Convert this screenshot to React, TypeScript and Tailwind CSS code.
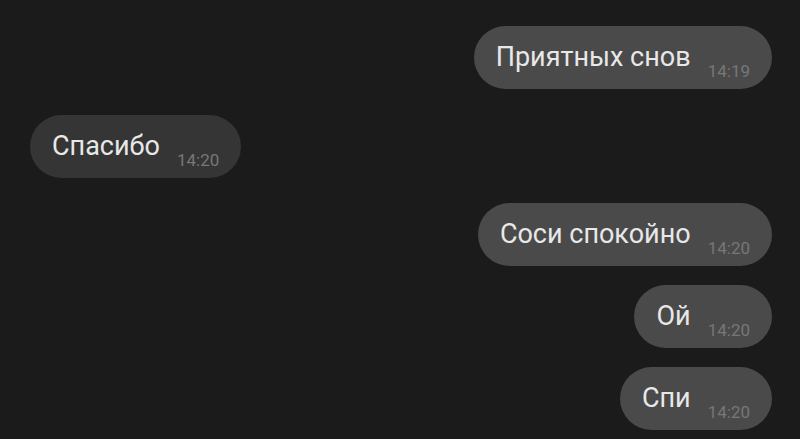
import React from 'react';

interface Message {
  id: number;
  text: string;
  time: string;
  mine: boolean;
  gap: string;
}

const messages: Message[] = [
  { id: 1, text: 'Приятных снов', time: '14:19', mine: true, gap: 'mt-[26px]' },
  { id: 2, text: 'Спасибо', time: '14:20', mine: false, gap: 'mt-[26px]' },
  { id: 3, text: 'Соси спокойно', time: '14:20', mine: true, gap: 'mt-[25px]' },
  { id: 4, text: 'Ой', time: '14:20', mine: true, gap: 'mt-[19px]' },
  { id: 5, text: 'Спи', time: '14:20', mine: true, gap: 'mt-[19px]' },
];

const App: React.FC = () => {
  return (
    <div
      className="w-[800px] h-[439px] overflow-hidden bg-[#1b1b1b] flex flex-col pl-[30px] pr-[28px]"
      style={{ fontFamily: 'Roboto, "Noto Sans", sans-serif' }}
    >
      {messages.map(msg => (
        <div
          key={msg.id}
          className={`${msg.gap} flex ${msg.mine ? 'justify-end' : 'justify-start'}`}
        >
          <div
            className={`h-[63px] rounded-full flex items-center pl-[22px] pr-[22px] ${
              msg.mine ? 'bg-[#4a4a4a]' : 'bg-[#353535]'
            }`}
          >
            <span className="text-[27px] leading-none text-[#e8e8e8]">{msg.text}</span>
            <span className="self-end mb-[9px] ml-[17px] text-[17px] leading-none text-[#777777]">
              {msg.time}
            </span>
          </div>
        </div>
      ))}
    </div>
  );
};

export default App;
